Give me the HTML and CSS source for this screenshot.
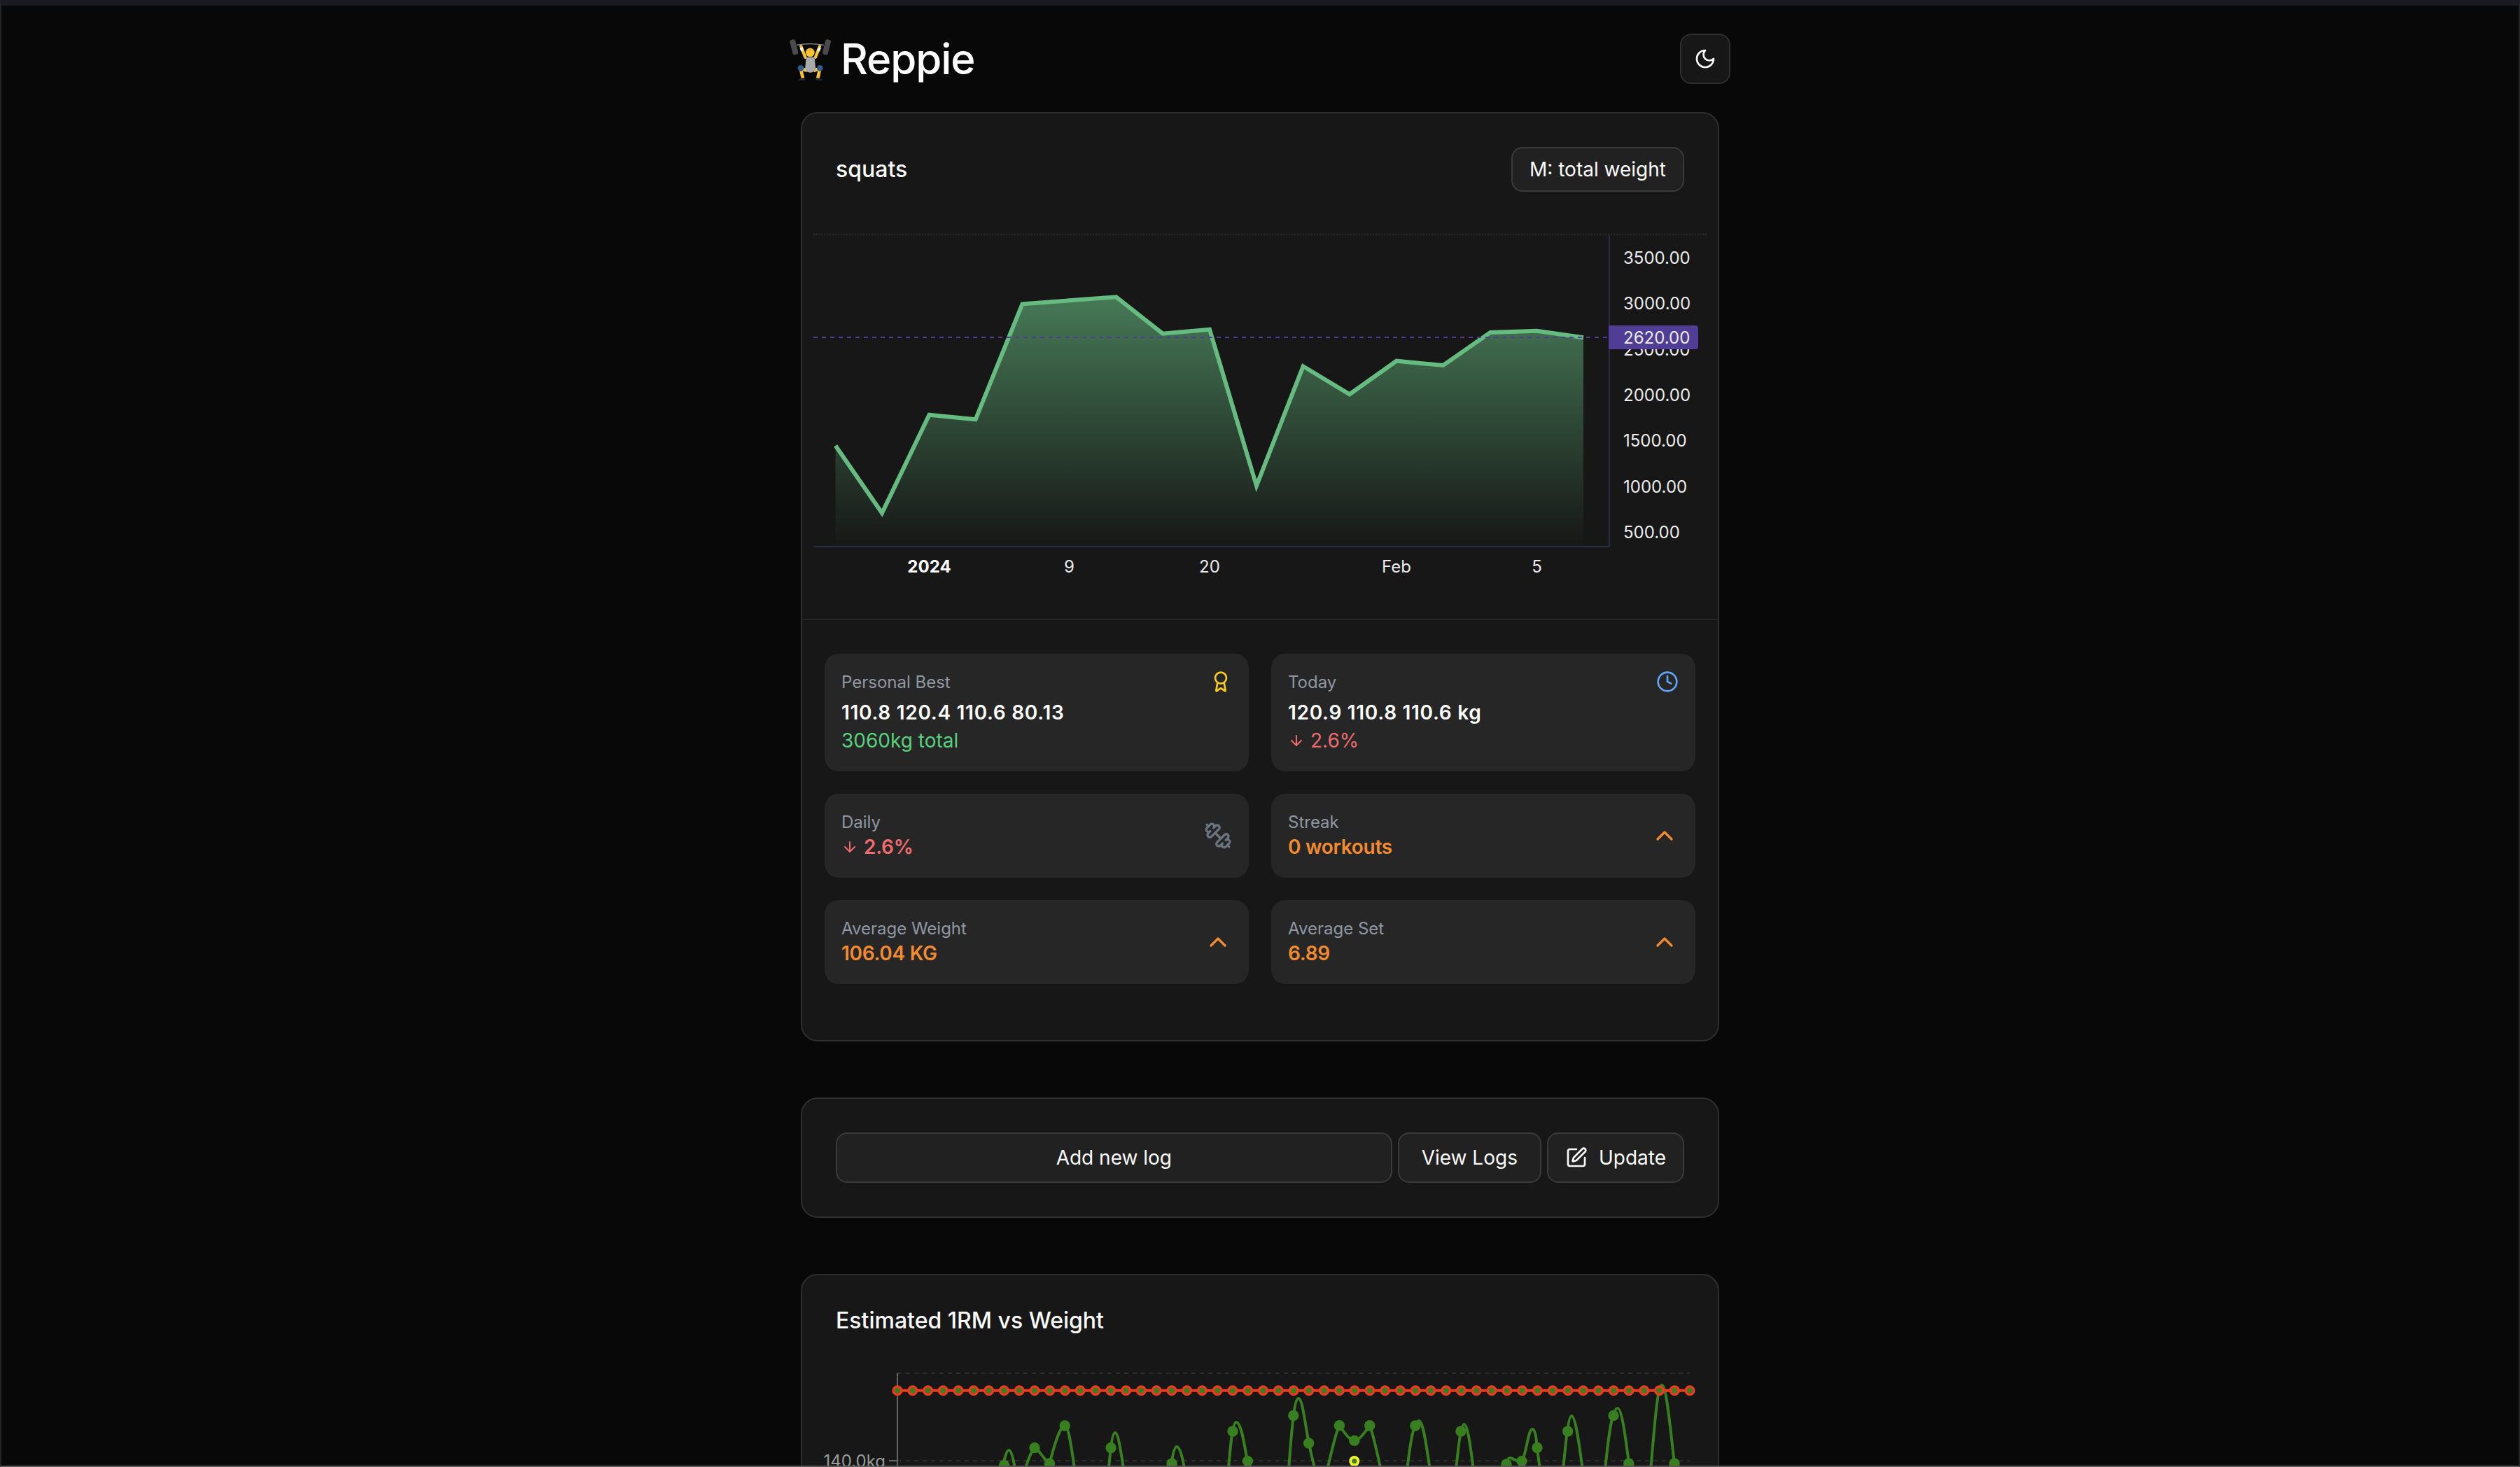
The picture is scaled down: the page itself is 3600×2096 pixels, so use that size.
FILE: index.html
```html
<!DOCTYPE html>
<html lang="en">
<head>
  <meta charset="UTF-8">
  <meta name="viewport" content="width=device-width, initial-scale=1.0">
  <title>Reppie</title>
  <link rel="stylesheet" href="styles.css">
</head>
<body>
  <div class="page">
    <header class="topbar">
      <div class="brand">
        <svg class="brand-emoji" viewBox="25 38 177 183" aria-hidden="true">
          <!-- plates -->
          <rect x="32" y="42" width="24" height="66" rx="8" fill="#4a4a4c" transform="rotate(-14 44 75)"/>
          <rect x="172" y="42" width="24" height="66" rx="8" fill="#4a4a4c" transform="rotate(14 184 75)"/>
          <path d="M55 66 Q113 56 172 66" fill="none" stroke="#8d8d90" stroke-width="4"/>
          <path d="M60 66 H68 M160 66 H168" stroke="#2f6fb5" stroke-width="5"/>
          <!-- arms and legs -->
          <path d="M92 118 L74 72 M136 118 L154 72" fill="none" stroke="#f7c52f" stroke-width="13" stroke-linecap="round"/>
          <path d="M74 78 L80 92 M154 78 L148 92" stroke="#f4f4f4" stroke-width="12"/>
          <path d="M100 176 L72 166 L82 208 M128 176 L155 166 L146 208" fill="none" stroke="#f7c52f" stroke-width="14" stroke-linejoin="round"/>
          <!-- tank top -->
          <path d="M96 118 H132 L137 172 Q114 196 91 172 Z" fill="#a9a9ab"/>
          <circle cx="113" cy="98" r="19" fill="#f8c630"/>
          <path d="M95 94 Q113 64 131 94 Q113 84 95 94 Z" fill="#f4b52a"/>
          <circle cx="73" cy="165" r="13" fill="#30598f"/>
          <circle cx="155" cy="165" r="13" fill="#30598f"/>
          <path d="M62 214 Q78 202 94 212 L90 218 H64 Z" fill="#1f2530"/>
          <path d="M134 212 Q150 202 168 214 L164 218 H138 Z" fill="#1f2530"/>
        </svg>
        <h1 class="brand-name">Reppie</h1>
      </div>
      <button class="icon-btn" type="button" aria-label="Toggle theme">
        <svg class="icon" viewBox="0 0 24 24"><path d="M12 3a6 6 0 0 0 9 9 9 9 0 1 1-9-9Z"/></svg>
      </button>
    </header>

    <main class="cards">
      <section class="card">
        <div class="card-head">
          <h2 class="card-title">squats</h2>
          <button class="btn btn-small" type="button">M: total weight</button>
        </div>

        <div class="price-chart">
          <svg class="price-svg" viewBox="1162 336 1276 504">
            <defs>
              <linearGradient id="areaFill" gradientUnits="userSpaceOnUse" x1="0" y1="424" x2="0" y2="780">
                <stop offset="0" stop-color="#66bb80" stop-opacity="0.6"/>
                <stop offset="1" stop-color="#66bb80" stop-opacity="0"/>
              </linearGradient>
            </defs>
            <path fill="url(#areaFill)" d="M1193.6 636.7 1260 733 1327.5 592.7 1393.6 599.3 1460.5 434.3 1594.5 424.3 1661 476.7 1728 470.7 1795 694 1861.6 523.3 1928 563.3 1995 515.7 2061.6 522 2129 475 2195.5 472.7 2262 482.3V780H1193.6Z"/>
            <path class="price-line" d="M1193.6 636.7 1260 733 1327.5 592.7 1393.6 599.3 1460.5 434.3 1594.5 424.3 1661 476.7 1728 470.7 1795 694 1861.6 523.3 1928 563.3 1995 515.7 2061.6 522 2129 475 2195.5 472.7 2262 482.3"/>
            <line class="price-guide" x1="1162" y1="482" x2="2298" y2="482"/>
            <path class="price-axis" d="M1162 781H2299V336"/>

            <text class="axis-y" x="2319" y="368">3500.00</text>
            <text class="axis-y" x="2319" y="433">3000.00</text>
            <text class="axis-y" x="2319" y="499">2500.00</text>
            <text class="axis-y" x="2319" y="564">2000.00</text>
            <text class="axis-y" x="2319" y="629">1500.00</text>
            <text class="axis-y" x="2319" y="695">1000.00</text>
            <text class="axis-y" x="2319" y="760">500.00</text>
            <path class="price-tag" d="M2298 465H2422a4 4 0 0 1 4 4V495a4 4 0 0 1-4 4H2298Z"/>
            <text class="axis-y" x="2319" y="482">2620.00</text>

            <text class="axis-x axis-x-bold" x="1327.5" y="809">2024</text>
            <text class="axis-x" x="1527.5" y="809">9</text>
            <text class="axis-x" x="1728" y="809">20</text>
            <text class="axis-x" x="1995" y="809">Feb</text>
            <text class="axis-x" x="2195.5" y="809">5</text>
          </svg>
        </div>

        <div class="stats">
          <div class="stat stat-tall">
            <div>
              <div class="stat-label">Personal Best</div>
              <div class="stat-main">110.8 120.4 110.6 80.13</div>
              <div class="stat-sub good">3060kg total</div>
            </div>
            <svg class="icon icon-award" viewBox="0 0 24 24">
              <path d="m15.477 12.89 1.515 8.526a.5.5 0 0 1-.81.47l-3.58-2.687a1 1 0 0 0-1.197 0l-3.586 2.686a.5.5 0 0 1-.81-.469l1.514-8.526"/>
              <circle cx="12" cy="8" r="6"/>
            </svg>
          </div>
          <div class="stat stat-tall">
            <div>
              <div class="stat-label">Today</div>
              <div class="stat-main">120.9 110.8 110.6 kg</div>
              <div class="stat-sub bad trend">
                <svg class="icon icon-arrow" viewBox="0 0 24 24"><path d="M12 5v14"/><path d="m19 12-7 7-7-7"/></svg>
                2.6%
              </div>
            </div>
            <svg class="icon icon-clock" viewBox="0 0 24 24">
              <circle cx="12" cy="12" r="10"/>
              <polyline points="12 6 12 12 16 14"/>
            </svg>
          </div>
          <div class="stat">
            <div>
              <div class="stat-label">Daily</div>
              <div class="stat-value bad trend">
                <svg class="icon icon-arrow" viewBox="0 0 24 24"><path d="M12 5v14"/><path d="m19 12-7 7-7-7"/></svg>
                2.6%
              </div>
            </div>
            <svg class="icon icon-big icon-muted" viewBox="0 0 24 24">
              <path d="M14.4 14.4 9.6 9.6"/>
              <path d="M18.657 21.485a2 2 0 1 1-2.829-2.828l-1.767 1.768a2 2 0 1 1-2.829-2.829l6.364-6.364a2 2 0 1 1 2.829 2.829l-1.768 1.767a2 2 0 1 1 2.828 2.829z"/>
              <path d="m21.5 21.5-1.4-1.4"/>
              <path d="M3.9 3.9 2.5 2.5"/>
              <path d="M6.404 12.768a2 2 0 1 1-2.829-2.829l1.768-1.767a2 2 0 1 1-2.828-2.829l2.828-2.828a2 2 0 1 1 2.829 2.828l1.767-1.768a2 2 0 1 1 2.829 2.829z"/>
            </svg>
          </div>
          <div class="stat">
            <div>
              <div class="stat-label">Streak</div>
              <div class="stat-value warn">0 workouts</div>
            </div>
            <svg class="icon icon-big icon-warn" viewBox="0 0 24 24"><path d="m18 15-6-6-6 6"/></svg>
          </div>
          <div class="stat">
            <div>
              <div class="stat-label">Average Weight</div>
              <div class="stat-value warn">106.04 KG</div>
            </div>
            <svg class="icon icon-big icon-warn" viewBox="0 0 24 24"><path d="m18 15-6-6-6 6"/></svg>
          </div>
          <div class="stat">
            <div>
              <div class="stat-label">Average Set</div>
              <div class="stat-value warn">6.89</div>
            </div>
            <svg class="icon icon-big icon-warn" viewBox="0 0 24 24"><path d="m18 15-6-6-6 6"/></svg>
          </div>
        </div>
      </section>

      <section class="card actions">
        <button class="btn btn-wide" type="button">Add new log</button>
        <button class="btn" type="button">View Logs</button>
        <button class="btn btn-icon" type="button">
          <svg class="icon" viewBox="0 0 24 24">
            <path d="M12 3H5a2 2 0 0 0-2 2v14a2 2 0 0 0 2 2h14a2 2 0 0 0 2-2v-7"/>
            <path d="M18.375 2.625a1 1 0 0 1 3 3l-9.013 9.014a2 2 0 0 1-.853.505l-2.873.84a.5.5 0 0 1-.62-.62l.84-2.873a2 2 0 0 1 .506-.852z"/>
          </svg>
          Update
        </button>
      </section>

      <section class="card">
        <h2 class="card-title card-title-solo">Estimated 1RM vs Weight</h2>
        <svg class="rm-svg" viewBox="1146 1940 1308 300">
          <line class="rm-grid" x1="1282" y1="1962" x2="2414" y2="1962"/>
          <line class="rm-grid" x1="1282" y1="2087" x2="2414" y2="2087"/>
          <path class="rm-axis" d="M1282 1962V2240M1270 2087H1282"/>
          <text class="rm-tick" x="1265" y="2096">140.0kg</text>

          <!-- estimated 1RM -->
          <g class="rm-green">
            <path d="M1425 2130C1431 2105 1436 2072 1441 2072C1446 2072 1450 2095 1455 2130"/>
            <path d="M1462 2108C1467 2090 1472 2075 1478 2068C1485 2072 1492 2086 1499 2091C1505 2072 1512 2040 1521 2037C1527 2037 1531 2072 1536 2105"/>
            <path d="M1583 2110C1585 2085 1588 2047 1593 2047C1598 2047 1602 2080 1607 2110"/>
            <path d="M1671 2110C1674 2085 1677 2067 1681 2067C1686 2067 1690 2085 1694 2110"/>
            <path d="M1754 2110C1757 2075 1760 2032 1766 2032C1773 2032 1778 2065 1782 2088C1784 2098 1786 2105 1788 2112"/>
            <path d="M1841 2100C1844 2060 1848 1998 1855 1998C1861 1998 1865 2040 1870 2062C1873 2078 1876 2090 1879 2100"/>
            <path d="M1896 2100C1902 2075 1908 2048 1913 2037C1920 2045 1927 2058 1935 2058C1943 2058 1950 2045 1957 2037C1962 2050 1968 2080 1973 2100"/>
            <path d="M2010 2100C2014 2070 2018 2032 2027 2030C2034 2032 2038 2070 2043 2100"/>
            <path d="M2080 2100C2083 2070 2087 2035 2091.5 2035C2097 2035 2101 2070 2105 2100"/>
            <path d="M2147 2110C2150 2095 2153 2083 2157 2083C2162 2083 2168 2090 2174 2088C2180 2080 2183 2042 2189 2042C2194 2042 2195 2060 2196 2068C2197 2080 2199 2090 2200 2100"/>
            <path d="M2233 2100C2236 2070 2240 2023 2245 2023C2251 2023 2256 2065 2261 2100"/>
            <path d="M2293 2100C2297 2060 2302 2012 2311 2012C2317 2012 2323 2060 2327 2091C2328 2098 2329 2102 2331 2110"/>
            <path d="M2358 2100C2362 2060 2367 1979 2374 1979C2381 1979 2387 2050 2392 2091C2393 2098 2394 2102 2396 2110"/>
          </g>
          <g class="rm-green-dots">
            <circle cx="1434.6" cy="2093.5" r="7.7"/>
            <circle cx="1478" cy="2068.5" r="7.7"/>
            <circle cx="1499.4" cy="2091" r="7.7"/>
            <circle cx="1521.2" cy="2037" r="7.7"/>
            <circle cx="1587" cy="2068.5" r="7.7"/>
            <circle cx="1674" cy="2091" r="7.7"/>
            <circle cx="1761" cy="2045" r="7.7"/>
            <circle cx="1782.4" cy="2087.6" r="7.7"/>
            <circle cx="1847.8" cy="2022.5" r="7.7"/>
            <circle cx="1869.6" cy="2062" r="7.7"/>
            <circle cx="1913.4" cy="2036.8" r="7.7"/>
            <circle cx="1934.8" cy="2058.4" r="7.7"/>
            <circle cx="1956.7" cy="2036.8" r="7.7"/>
            <circle cx="2021.9" cy="2037" r="7.7"/>
            <circle cx="2087" cy="2045" r="7.7"/>
            <circle cx="2152" cy="2092" r="7.7"/>
            <circle cx="2174" cy="2087.6" r="7.7"/>
            <circle cx="2196" cy="2068.5" r="7.7"/>
            <circle cx="2239.7" cy="2045" r="7.7"/>
            <circle cx="2305" cy="2022.5" r="7.7"/>
            <circle cx="2326.8" cy="2091" r="7.7"/>
            <circle cx="2392" cy="2091" r="7.7"/>
          </g>
          <circle class="rm-best" cx="1934.8" cy="2087.6" r="5.5"/>

          <!-- weight, capped at the top -->
          <line class="rm-red-line" x1="1282" y1="1986.7" x2="2414" y2="1986.7"/>
          <line class="rm-red-dots" x1="1282" y1="1986.7" x2="2415" y2="1986.7"/>
          <line class="rm-red-cores" x1="1282" y1="1986.7" x2="2415" y2="1986.7"/>
        </svg>
      </section>
    </main>
  </div>
</body>
</html>
```

FILE: styles.css
```css
* {
  box-sizing: border-box;
}
html, body {
  height: 100%;
  overflow: hidden;
}
body {
  margin: 0;
  font-family: Inter, "Noto Sans", sans-serif;
  background-color: #080808;
  color: #fafafa;
  border-top: 8px solid #1a1a21;
  border-left: 2px solid #242424;
  border-right: 2px solid #242424;
  border-bottom: 2px solid #5a5a5a;
}
h1, h2 {
  margin: 0;
}
.page {
  width: 1344px;
  margin: 0 auto;
  padding-top: 40px;
}

/* header */
.topbar {
  display: flex;
  justify-content: space-between;
  align-items: center;
  height: 72px;
  margin-bottom: 40px;
}
.brand {
  display: flex;
  align-items: center;
  gap: 14px;
}
.brand-emoji {
  width: 59px;
  height: 61px;
  margin-top: 2px;
}
.brand-name {
  font-size: 60px;
  font-weight: 500;
  letter-spacing: -0.018em;
  line-height: 72px;
  color: #fff;
}
.icon-btn {
  display: flex;
  align-items: center;
  justify-content: center;
  width: 72px;
  height: 72px;
  padding: 0;
  background: #171717;
  border: 2px solid #2e2e2e;
  border-radius: 16px;
  color: #fafafa;
}

/* icons */
.icon {
  display: block;
  flex: none;
  width: 32px;
  height: 32px;
  fill: none;
  stroke: currentColor;
  stroke-width: 2;
  stroke-linecap: round;
  stroke-linejoin: round;
}
.icon-big {
  width: 40px;
  height: 40px;
}
.icon-arrow {
  width: 24px;
  height: 24px;
}
.icon-award {
  color: #facc15;
}
.icon-clock {
  color: #60a5fa;
}
.icon-muted {
  color: #6b7280;
}
.icon-warn {
  color: #f28b2f;
}

/* cards */
.cards {
  display: flex;
  flex-direction: column;
  gap: 80px;
  margin: 0 16px;
}
.card {
  flex: none;
  background: #171717;
  border: 2px solid #2e2e2e;
  border-radius: 24px;
}
.card-head {
  display: flex;
  justify-content: space-between;
  align-items: center;
  padding: 48px 48px 60px;
}
.card-title {
  font-size: 32px;
  font-weight: 500;
  line-height: 34px;
  color: #fafafa;
}
.card-title-solo {
  padding: 48px 48px 0;
}

/* buttons */
.btn {
  display: flex;
  align-items: center;
  justify-content: center;
  height: 72px;
  padding: 0 32px;
  background: #212121;
  border: 2px solid #3a3a3a;
  border-radius: 16px;
  color: #fafafa;
  font-family: inherit;
  font-size: 28px;
  font-weight: 400;
  line-height: 40px;
}
.btn-small {
  height: 64px;
  padding: 0 24px;
}
.btn-wide {
  flex: 1;
}
.btn-icon {
  gap: 16px;
  padding: 0 24px;
}
.actions {
  display: flex;
  gap: 8px;
  padding: 48px;
}

/* total weight chart */
.price-chart {
  margin: 0 16px;
  padding-bottom: 44px;
  border-top: 2px dotted #2f2f2f;
}
.price-svg {
  display: block;
  width: 1276px;
  height: 504px;
}
.price-line {
  fill: none;
  stroke: #66bb80;
  stroke-width: 6;
  stroke-linejoin: miter;
}
.price-guide {
  stroke: #4f3d96;
  stroke-width: 2;
  stroke-dasharray: 6 6;
}
.price-axis {
  fill: none;
  stroke: #2b2b43;
  stroke-width: 2;
}
.price-tag {
  fill: #4f3d96;
}
.axis-y, .axis-x {
  font-size: 24px;
  fill: #ececec;
  dominant-baseline: central;
}
.axis-x {
  text-anchor: middle;
}
.axis-x-bold {
  font-weight: 700;
  fill: #fff;
}

/* stat tiles */
.stats {
  display: grid;
  grid-template-columns: 1fr 1fr;
  gap: 32px;
  padding: 48px 32px 80px;
  border-top: 2px solid #262626;
}
.stat {
  display: flex;
  justify-content: space-between;
  align-items: center;
  height: 120px;
  padding: 24px;
  background: #262626;
  border-radius: 20px;
}
.stat-tall {
  align-items: flex-start;
  height: 168px;
}
.stat-label {
  font-size: 24px;
  line-height: 34px;
  color: #9097a3;
}
.stat-main {
  margin-top: 6px;
  font-size: 28px;
  font-weight: 600;
  letter-spacing: 0.7px;
  line-height: 40px;
  color: #fff;
}
.stat-sub {
  font-size: 28px;
  line-height: 40px;
}
.stat-value {
  margin-top: -2px;
  font-size: 28px;
  font-weight: 600;
  letter-spacing: -0.01em;
  line-height: 40px;
}
.trend {
  display: flex;
  align-items: center;
  gap: 8px;
}
.good {
  color: #58d17e;
}
.bad {
  color: #ee6b6e;
}
.warn {
  color: #f28b2f;
}

/* 1RM chart */
.rm-svg {
  display: block;
  width: 1308px;
  height: 300px;
  margin-top: 36px;
}
.rm-grid {
  stroke: #2d2d2d;
  stroke-width: 2;
  stroke-dasharray: 6 6;
}
.rm-axis {
  fill: none;
  stroke: #666;
  stroke-width: 2;
}
.rm-tick {
  font-size: 24px;
  fill: #9a9a9a;
  text-anchor: end;
}
.rm-green path {
  fill: none;
  stroke: #38801f;
  stroke-width: 4;
}
.rm-green-dots circle {
  fill: #38801f;
}
.rm-best {
  fill: #38801f;
  stroke: #f5f52e;
  stroke-width: 4;
}
.rm-red-line {
  stroke: #ee3a20;
  stroke-width: 4;
}
.rm-red-dots {
  stroke: #ee3a20;
  stroke-width: 15;
  stroke-linecap: round;
  stroke-dasharray: 0 21.77;
}
.rm-red-cores {
  stroke: #38801f;
  stroke-width: 8;
  stroke-linecap: round;
  stroke-dasharray: 0 21.77;
}
```
